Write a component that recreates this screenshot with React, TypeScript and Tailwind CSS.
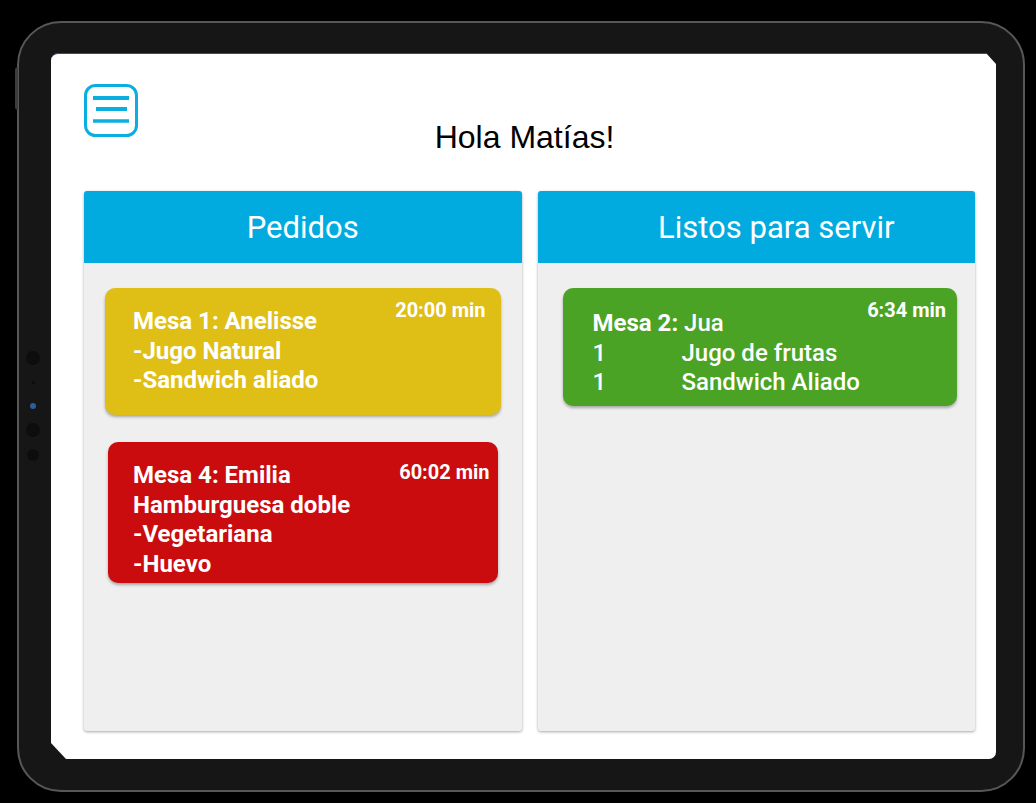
const roboto = "font-['Roboto',sans-serif]";

function MenuIcon() {
  return (
    <svg width="54" height="53" viewBox="0 0 54 53" className="block">
      <rect x="1.5" y="1.5" width="51" height="50" rx="10" fill="none" stroke="#0aaee0" strokeWidth="3" />
      <line x1="9" y1="14" x2="45" y2="14" stroke="#0aaee0" strokeWidth="4" />
      <line x1="12" y1="25" x2="43" y2="25" stroke="#0aaee0" strokeWidth="4" />
      <line x1="9" y1="37" x2="45" y2="37" stroke="#0aaee0" strokeWidth="3.5" />
    </svg>
  );
}

function PanelHeader({ title, offset }: { title: string; offset?: boolean }) {
  return (
    <div
      className={`h-[72px] flex items-center justify-center bg-[#02abdf] rounded-t-[3px] ${offset ? "pl-[40px]" : ""}`}
    >
      <span className={`${roboto} text-[31px] leading-none text-white`}>{title}</span>
    </div>
  );
}

export default function App() {
  return (
    <div className="min-h-screen w-full bg-black pl-[17px] pt-[21px]">
      <div className="relative w-[1008px] h-[771px] rounded-[44px] border-2 border-[#575757] bg-[#161616] pl-[32px] pt-[30px] pr-[27px] pb-[31px]">
        {/* side button + sensors */}
        <div className="absolute -left-[4px] top-[44px] w-[3px] h-[43px] bg-[#3c3c3c] rounded-l-sm" />
        <div className="absolute left-[7px] top-[328px] w-[14px] h-[14px] rounded-full bg-[#0d0d0d]" />
        <div className="absolute left-[13px] top-[358px] w-[3px] h-[3px] rounded-full bg-[#0b0b0b]" />
        <div className="absolute left-[11px] top-[380px] w-[6px] h-[6px] rounded-full bg-[#2a5e9c]" />
        <div className="absolute left-[7px] top-[400px] w-[14px] h-[14px] rounded-full bg-[#0d0d0d]" />
        <div className="absolute left-[8px] top-[426px] w-[12px] h-[12px] rounded-full bg-[#0d0d0d]" />

        {/* screen */}
        <div className="h-full w-full bg-white border-t border-[#3c4a78] rounded-[7px] [clip-path:polygon(0_0,calc(100%_-_10px)_0,100%_11px,100%_100%,15px_100%,0_calc(100%_-_16px))] pl-[33px] pr-[21px] pt-[30px]">
          <MenuIcon />
          <h1 className="-mt-[16px] pr-[10px] text-center text-[32px] leading-none text-black font-['Liberation_Sans',Arial,sans-serif]">
            Hola Matías!
          </h1>

          <div className="mt-[38px] flex gap-[16px] h-[540px]">
            {/* Pedidos */}
            <div className="flex-1 flex flex-col bg-[#efefef] rounded-[3px] shadow-[0_1px_3px_rgba(0,0,0,0.35)]">
              <PanelHeader title="Pedidos" />
              <div className={`${roboto} text-white`}>
                <div className="relative mt-[25px] mx-[21px] h-[127px] rounded-[10px] bg-[#dfbf16] shadow-[0_2px_3px_rgba(0,0,0,0.3)] pt-[19px] pl-[28px]">
                  <span className="absolute right-[15px] top-[12px] text-[20px] leading-none font-bold">20:00 min</span>
                  <div className="text-[24px] leading-[29.5px] font-bold">
                    <p>Mesa 1: Anelisse</p>
                    <p>-Jugo Natural</p>
                    <p>-Sandwich aliado</p>
                  </div>
                </div>
                <div className="relative mt-[27px] mx-[24px] h-[141px] rounded-[10px] bg-[#ca0c0f] shadow-[0_2px_3px_rgba(0,0,0,0.3)] pt-[19px] pl-[25px]">
                  <span className="absolute right-[8px] top-[20px] text-[20px] leading-none font-bold">60:02 min</span>
                  <div className="text-[24px] leading-[29.5px] font-bold">
                    <p>Mesa 4: Emilia</p>
                    <p>Hamburguesa doble</p>
                    <p>-Vegetariana</p>
                    <p>-Huevo</p>
                  </div>
                </div>
              </div>
            </div>

            {/* Listos para servir */}
            <div className="flex-1 flex flex-col bg-[#efefef] rounded-[3px] shadow-[0_1px_3px_rgba(0,0,0,0.35)]">
              <PanelHeader title="Listos para servir" offset />
              <div className={`${roboto} text-white`}>
                <div className="relative mt-[25px] ml-[25px] mr-[18px] h-[118px] rounded-[10px] bg-[#4aa325] shadow-[0_2px_3px_rgba(0,0,0,0.3)] pt-[21px] pl-[30px]">
                  <span className="absolute right-[11px] top-[12px] text-[20px] leading-none font-bold">6:34 min</span>
                  <div className="text-[24px] leading-[29.5px] font-medium">
                    <p>
                      <span className="font-bold">Mesa 2:</span> Jua
                    </p>
                    <p className="flex">
                      <span className="w-[89px]">1</span>
                      <span>Jugo de frutas</span>
                    </p>
                    <p className="flex">
                      <span className="w-[89px]">1</span>
                      <span>Sandwich Aliado</span>
                    </p>
                  </div>
                </div>
              </div>
            </div>
          </div>
        </div>
      </div>
    </div>
  );
}
